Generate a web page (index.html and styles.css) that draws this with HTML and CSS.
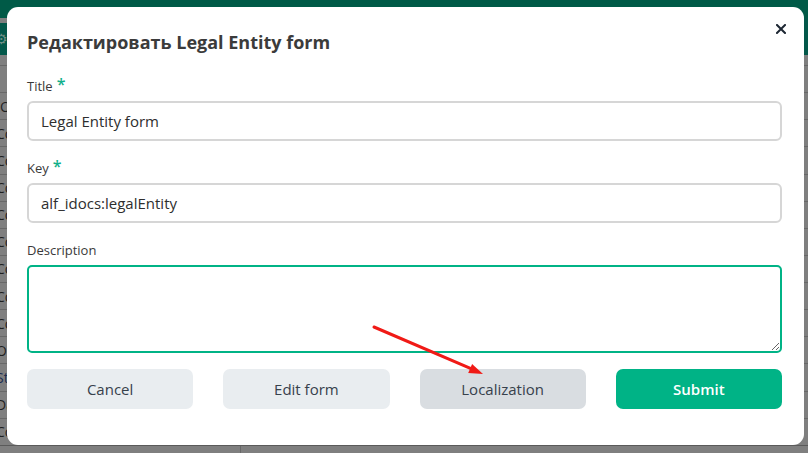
FILE: index.html
```html
<!DOCTYPE html>
<html lang="ru">
<head>
<meta charset="utf-8">
<title>Редактировать Legal Entity form</title>
<link rel="stylesheet" href="styles.css">
</head>
<body>
<div class="page">
  <div class="topbar"></div>
  <div class="subbar"><span class="gear">&#9881;</span></div>
  <div class="table">
    <div class="row row-head"></div>
    <div class="row"><span class="cell"></span></div>
    <div class="row"><span class="cell">Orders</span></div>
    <div class="row"><span class="cell cut">Contract</span></div>
    <div class="row"><span class="cell cut">Contract</span></div>
    <div class="row"><span class="cell cut">Contract</span></div>
    <div class="row"><span class="cell cut">Contract</span></div>
    <div class="row"><span class="cell cut">Contract</span></div>
    <div class="row"><span class="cell cut">Contract</span></div>
    <div class="row"><span class="cell cut">Contract</span></div>
    <div class="row"><span class="cell cut">Code</span></div>
    <div class="row"><span class="cell cut">Order</span></div>
    <div class="row"><span class="cell cut link">Status</span></div>
    <div class="row"><span class="cell cut">Data</span></div>
    <div class="row"><span class="cell cut">Contract</span></div>
    <div class="row row-foot"><span class="cell"></span></div>
  </div>
</div>

<div class="modal">
  <button class="close" type="button" aria-label="Close">
    <svg width="10" height="10" viewBox="0 0 10 10"><path d="M1 1 L9 9 M9 1 L1 9" stroke="#1d2733" stroke-width="2" stroke-linecap="square" fill="none"/></svg>
  </button>
  <h2 class="modal-title">Редактировать Legal Entity form</h2>

  <div class="field">
    <label class="label">Title<span class="req">*</span></label>
    <input class="input" type="text" value="Legal Entity form">
  </div>
  <div class="field">
    <label class="label">Key<span class="req">*</span></label>
    <input class="input" type="text" value="alf_idocs:legalEntity">
  </div>
  <div class="field field-last">
    <label class="label">Description</label>
    <textarea class="textarea"></textarea>
  </div>

  <div class="actions">
    <button class="btn btn-light" type="button">Cancel</button>
    <button class="btn btn-light" type="button">Edit form</button>
    <button class="btn btn-hover" type="button">Localization</button>
    <button class="btn btn-primary" type="button">Submit</button>
  </div>
</div>

<svg class="annotation" width="808" height="453" viewBox="0 0 808 453">
  <line x1="374" y1="327" x2="471" y2="368.7" stroke="#f01a16" stroke-width="3" stroke-linecap="round"/>
  <polygon points="483,374 468.2,372.9 472.1,364" fill="#f01a16"/>
</svg>
</body>
</html>
```

FILE: styles.css
```css
* { box-sizing: border-box; }

html, body {
  margin: 0;
  padding: 0;
  width: 808px;
  height: 453px;
  overflow: hidden;
  background: #7f7f7f;
  font-family: "Open Sans", "Noto Sans", sans-serif;
}

.page {
  width: 808px;
  height: 453px;
  display: flex;
  flex-direction: column;
  overflow: hidden;
}

.topbar {
  flex: none;
  height: 18px;
  background: #005a47;
}

.subbar {
  flex: none;
  height: 37px;
  background: linear-gradient(#7f7f7f, #7f7f7f) no-repeat 0 0 / 40px 5px, #03584a;
  display: flex;
  align-items: center;
  padding-top: 5px;
}

.gear {
  color: #6e8f86;
  font-size: 14px;
  line-height: 1;
  text-indent: -5px;
  display: block;
}

.table {
  flex: none;
  display: flex;
  flex-direction: column;
  background: #7f7f7f;
}

.row {
  flex: none;
  height: 27.14px;
  border-bottom: 1px solid #686868;
  display: flex;
  align-items: center;
  font-size: 14px;
  color: #1f1f1f;
  overflow: hidden;
}

.row-head { height: 11px; }

.row-foot {
  border-bottom: 0;
  border-top: 1px solid #5a5a5a;
  margin-top: -1px;
  height: 20px;
}

.cell {
  width: 241px;
  border-right: 1px solid #686868;
  align-self: stretch;
  display: flex;
  align-items: center;
  white-space: nowrap;
  overflow: hidden;
}

.cut { text-indent: -4px; }
.link { color: #1c2d4f; }

.modal {
  position: absolute;
  left: 7px;
  top: 7px;
  width: 797px;
  height: 438px;
  background: #fff;
  border-radius: 11px;
  padding: 23px 22px 0 20px;
}

.close {
  position: absolute;
  top: 17px;
  right: 18px;
  width: 10px;
  height: 10px;
  padding: 0;
  border: 0;
  background: none;
  display: flex;
}

.modal-title {
  margin: 0 0 22px;
  font-size: 18px;
  line-height: 24px;
  font-weight: 700;
  color: #3b3b3b;
}

.field {
  display: flex;
  flex-direction: column;
  margin-bottom: 17px;
}

.field-last { margin-bottom: 16px; }

.label {
  font-size: 13px;
  line-height: 20px;
  color: #3a3a3a;
  margin-bottom: 5px;
  display: flex;
  align-items: flex-start;
}

.req {
  color: #12b08a;
  font-size: 16px;
  font-weight: 600;
  line-height: 16px;
  margin-left: 4px;
}

.input {
  height: 40px;
  border: 2px solid #d6d6d6;
  border-radius: 6px;
  padding: 0 12px;
  font-family: inherit;
  font-size: 15px;
  color: #2e2e2e;
  outline: none;
}

.textarea {
  height: 88px;
  border: 2px solid #00b386;
  border-radius: 5px;
  font-family: inherit;
  font-size: 15px;
  outline: none;
  resize: vertical;
  display: block;
}

.actions {
  display: grid;
  grid-template-columns: repeat(4, 1fr);
  column-gap: 30px;
}

.btn {
  height: 40px;
  border: 0;
  border-radius: 7px;
  font-family: inherit;
  font-size: 15px;
  font-weight: 500;
  color: #37414c;
  padding: 0;
}

.btn-light { background: #e9edf0; }
.btn-hover { background: #d9dde1; }

.btn-primary {
  background: #00b386;
  color: #fff;
  font-weight: 600;
}

.annotation {
  position: absolute;
  left: 0;
  top: 0;
  pointer-events: none;
}
```
